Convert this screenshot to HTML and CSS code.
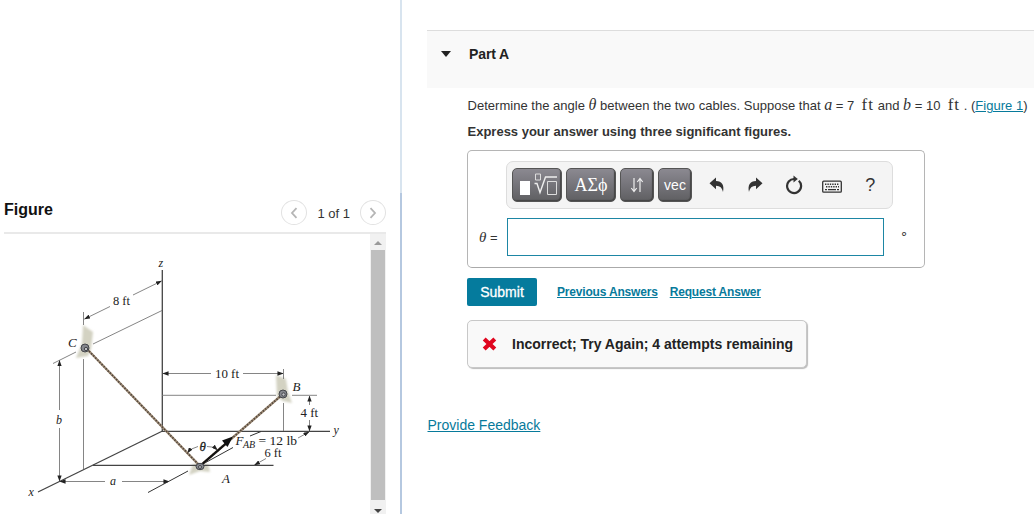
FILE: index.html
```html
<!DOCTYPE html>
<html lang="en">
  <head>
    <meta charset="UTF-8" />
    <meta name="viewport" content="width=device-width, initial-scale=1.0" />
    <title>Part A</title>
    <link rel="stylesheet" href="styles.css">
  </head>
  <body>
    <aside class="figure-panel">
      <header class="figure-header">
        <h2>Figure</h2>
        <nav class="pager">
          <button class="round" aria-label="Previous">
            <svg width="10" height="14" viewBox="0 0 10 14"><path d="M7.5 2.2 3 7l4.5 4.8" /></svg>
          </button>
          <span>1 of 1</span>
          <button class="round" aria-label="Next">
            <svg width="10" height="14" viewBox="0 0 10 14"><path d="M2.5 2.2 7 7l-4.5 4.8" /></svg>
          </button>
        </nav>
      </header>
      <div class="figure-body">
        <svg class="diagram" width="366" height="280" viewBox="4 234 366 280">
          <defs>
            <marker id="tip" viewBox="0 0 7 5" refX="6.5" refY="2.5" markerWidth="6" markerHeight="4.3" markerUnits="userSpaceOnUse" orient="auto-start-reverse">
              <path d="M0 0 7 2.5 0 5z" fill="#222" />
            </marker>
            <filter id="soft" x="-30%" y="-30%" width="160%" height="160%">
              <feGaussianBlur stdDeviation="0.8" />
            </filter>
          </defs>

          <!-- wall plates -->
          <g fill="#d3d2c2" filter="url(#soft)">
            <path d="M83 325 93 332 91 349 88 356 76 358 82 343z" />
            <path d="M276 375 286 379 288 392 292 403 283 401 277 397z" />
            <path d="M193 464 208 464 210 472 200 471 189 475z" />
          </g>

          <!-- axes -->
          <g class="axis">
            <path d="M162.300 270V431" />
            <path d="M162 431.300H330" />
            <path d="M162.500 431 38 492" />
            <path d="M93 465.300H273.500" />
          </g>
          <g class="thin">
            <path d="M162 310.500 93 344M76 352 53 363.500" />
            <path d="M83.500 312V325M83.500 359V469" />
            <path d="M162 395.300H276M292 395.300H317" />
            <path d="M283.500 369V379M283.500 403V431" />
          </g>
          <path class="guide" d="M148 492.500 188 471M202 464.500 233 447.500M250 436 261 431.500" />

          <!-- dimensions -->
          <g class="thin">
            <path d="M133 295 161.500 281" marker-end="url(#tip)" />
            <path d="M110 306.500 84.500 319" marker-end="url(#tip)" />
            <path d="M211 373.500H163" marker-end="url(#tip)" />
            <path d="M243 373.500H283" marker-end="url(#tip)" />
            <path d="M59.500 410V360.500" marker-end="url(#tip)" />
            <path d="M59.500 428V481" marker-end="url(#tip)" />
            <path d="M105 481.500H60" marker-end="url(#tip)" />
            <path d="M122 481.500H169" marker-end="url(#tip)" />
            <path d="M309.500 405V396" marker-end="url(#tip)" />
            <path d="M309.500 420V431" marker-end="url(#tip)" />
            <path d="M298 438 309 432" marker-end="url(#tip)" />
            <path d="M266 458.500 254.500 465" marker-end="url(#tip)" />
            <path d="M198 446.500Q191 448 187.500 453" marker-end="url(#tip)" />
            <path d="M207 446.500Q213 446 217.500 450" marker-end="url(#tip)" />
          </g>

          <!-- cables -->
          <path class="cable" d="M87 349 200 466 283 394" />
          <path class="strand" d="M87 349 200 466 283 394" />
          <path class="force" d="M200 466 226 443.500" />
          <path d="M233 436.500 227.500 447 222 440.500z" fill="#111" />

          <!-- pins -->
          <g class="pin">
            <circle cx="85" cy="348" r="4" /><circle class="hole" cx="86" cy="349" r="1.700" />
            <circle cx="283" cy="394" r="4" /><circle class="hole" cx="283.500" cy="394.500" r="1.700" />
            <ellipse cx="200" cy="466.500" rx="4" ry="3.200" /><circle class="hole" cx="200" cy="467" r="1.500" />
          </g>

          <g class="label">
            <text class="it" x="158.500" y="267">z</text>
            <text x="113" y="304.500" textLength="17" lengthAdjust="spacingAndGlyphs">8 ft</text>
            <text class="it big" x="68" y="346.500">C</text>
            <text x="215" y="378" textLength="24" lengthAdjust="spacingAndGlyphs">10 ft</text>
            <text class="it big" x="292.500" y="391">B</text>
            <text x="300.500" y="417" textLength="17.500" lengthAdjust="spacingAndGlyphs">4 ft</text>
            <text class="it" x="333.500" y="434">y</text>
            <text class="it" x="56" y="424">b</text>
            <text class="it" x="110" y="484.500">a</text>
            <text class="it" x="28.500" y="496">x</text>
            <text class="it big" x="222" y="483">A</text>
            <text class="it big theta" x="199.500" y="450.500">θ</text>
            <text class="it big" x="235.500" y="445">F</text>
            <text class="it sub" x="243" y="448">AB</text>
            <text x="258.500" y="445" textLength="38.500" lengthAdjust="spacingAndGlyphs">= 12 lb</text>
            <text x="264.500" y="457" textLength="17" lengthAdjust="spacingAndGlyphs">6 ft</text>
          </g>
        </svg>
        <div class="scrollbar">
          <span class="arrow up"></span>
          <span class="thumb"></span>
          <span class="arrow down"></span>
        </div>
      </div>
    </aside>

    <main>
      <header class="part-header">
        <span class="caret"></span>
        <h1>Part A</h1>
      </header>

      <section class="part">
        <p class="question">Determine the angle <i class="math">θ</i> between the two cables. Suppose that <i class="math">a</i> = 7 &nbsp;<span class="math ft">ft</span> and <i class="math">b</i> = 10 &nbsp;<span class="math ft">ft</span> . (<a href="#">Figure 1</a>)</p>
        <p class="hint">Express your answer using three significant figures.</p>

        <div class="answer">
          <div class="toolbar">
            <button class="key wide" aria-label="Templates">
              <svg width="40" height="26" viewBox="0 0 40 26">
                <path d="M3 9h10v14H3z" fill="#fff" />
                <path d="M18.500 2h5v6h-5zM30.500 9.500h9v13h-9z" fill="none" stroke="#ddd" />
                <path d="M17.500 11.500h2.500l3 9L28.500 5H40" fill="none" stroke="#eee" stroke-width="1.400" />
              </svg>
            </button>
            <button class="key wide greek">ΑΣϕ</button>
            <button class="key narrow" aria-label="Arrows">
              <svg width="14" height="18" viewBox="0 0 14 18"><path d="M4 2v13M1.300 12 4 15.500 6.700 12M10 16V3M7.300 6 10 2.500 12.700 6" /></svg>
            </button>
            <button class="key narrow">vec</button>
            <button class="tool first" aria-label="Undo">
              <svg width="16" height="16" viewBox="0 0 16 16"><path d="M.5 6.200 7 .5v3.600c6 .2 8.500 4.200 7 10.900C13 10.800 11.200 9 7 8.800v3.400z" /></svg>
            </button>
            <button class="tool" aria-label="Redo">
              <svg width="16" height="16" viewBox="0 0 16 16"><path d="M15.500 6.200 9 .5v3.600C3 4.300.5 8.300 2 15 3 10.800 4.800 9 9 8.800v3.400z" /></svg>
            </button>
            <button class="tool" aria-label="Reset">
              <svg width="18" height="20" viewBox="0 0 18 20"><path class="ring" d="M13.800 5.800A7 7 0 1 1 9.500 4" /><path d="M8.500.500 12.800 4 8.500 7.500z" /></svg>
            </button>
            <button class="tool keyboard" aria-label="Keyboard">
              <svg width="20" height="14" viewBox="0 0 20 14">
                <rect x=".7" y="1.200" width="18.600" height="11" rx="1" fill="none" stroke="#333" stroke-width="1.300" />
                <path d="M3 4.300h14M4 6.800h13" stroke="#333" stroke-width="1.500" stroke-dasharray="1.400 1" />
                <path d="M3 9.700h2M6 9.700h8M15 9.700h2" stroke="#333" stroke-width="1.300" />
              </svg>
            </button>
            <button class="tool help">?</button>
          </div>
          <div class="entry">
            <label for="theta"><i class="math">θ</i> =</label>
            <input id="theta" type="text" />
            <span class="unit">∘</span>
          </div>
        </div>

        <div class="actions">
          <button class="submit">Submit</button>
          <a href="#">Previous Answers</a>
          <a href="#">Request Answer</a>
        </div>

        <div class="feedback">
          <svg width="15" height="14" viewBox="0 0 15 14"><path d="M2.200 2 12.800 12M12.800 2 2.200 12" stroke="#e0061f" stroke-width="4.200" /></svg>
          <strong>Incorrect; Try Again; 4 attempts remaining</strong>
        </div>
      </section>

      <a class="provide" href="#">Provide Feedback</a>
    </main>
  </body>
</html>
```
FILE: styles.css
```css
* {
  padding: 0;
  margin: 0;
  box-sizing: border-box;
}

body {
  display: grid;
  grid-template-columns: 402px 1fr;
  height: 514px;
  overflow: hidden;
  background-color: #fff;
  color: #333;
  font-family: "Liberation Sans", Arial, sans-serif;
  font-size: 13px;
}

button {
  border: none;
  background: none;
  font-family: inherit;
}

a {
  color: #077a9b;
}

/* left side */

.figure-panel {
  padding: 193px 14px 0 4px;
  background: linear-gradient(#d8e4ef 193px, #b5c8e0 193px) right / 2px 100% no-repeat;
  overflow: hidden;
}

.figure-header {
  display: flex;
  justify-content: space-between;
  height: 41px;
  width: 382px;
  border-bottom: 2px solid #e9e9e9;
}

h2 {
  padding-top: 7px;
  color: #111;
  font-size: 16px;
  line-height: 20px;
}

.pager {
  display: flex;
  align-items: center;
  gap: 10px;
  font-size: 13px;
}

.pager span {
  padding-top: 2px;
}

.round {
  display: grid;
  place-items: center;
  width: 26px;
  height: 25px;
  border: 1px solid #e2e2e2;
  border-radius: 50%;
}

.round path {
  fill: none;
  stroke: #b5b5b5;
  stroke-width: 1.8;
}

.figure-body {
  display: flex;
  width: 382px;
  height: 280px;
}

.scrollbar {
  display: flex;
  flex-direction: column;
  align-items: center;
  width: 16px;
  background-color: #f1f1f1;
}

.arrow {
  flex: none;
  border: 4px solid transparent;
}

.up {
  margin: 3px 0 5px;
  border-bottom-color: #999;
}

.thumb {
  flex: none;
  width: 14px;
  height: 250px;
  background-color: #bfbfbf;
}

.down {
  margin-top: 9px;
  border-top-color: #444;
}

/* diagram */

.diagram {
  flex: none;
}

.axis path {
  fill: none;
  stroke: #444;
  stroke-width: 1.3;
}

.thin path {
  fill: none;
  stroke: #777;
  stroke-width: 0.9;
}

.guide {
  fill: none;
  stroke: #333;
}

.cable {
  fill: none;
  stroke: #9c8a75;
  stroke-width: 2.4;
}

.strand {
  fill: none;
  stroke: #50443a;
  stroke-width: 1.8;
  stroke-dasharray: 1.3 1.7;
}

.force {
  stroke: #111;
  stroke-width: 2.2;
}

.pin circle,
.pin ellipse {
  fill: #85878d;
  stroke: #44464a;
}

.pin .hole {
  fill: #bfc0c5;
}

.label {
  fill: #222;
  font-family: "Liberation Serif", "Times New Roman", serif;
  font-size: 12px;
}

.it {
  font-style: italic;
}

.big {
  font-size: 13px;
}

.sub {
  font-size: 10px;
}

.theta {
  stroke: #222;
  stroke-width: 0.3;
}

/* right side */

main {
  padding: 30px 0 0 25px;
}

.part-header {
  display: flex;
  align-items: flex-start;
  gap: 18px;
  height: 58px;
  padding: 15px 14px;
  border-top: 1px solid #ddd;
  background-color: #f9f9f9;
}

.caret {
  margin-top: 5px;
  border: 5.5px solid transparent;
  border-top: 6px solid #222;
  border-bottom: 0;
}

h1 {
  font-size: 14px;
  line-height: 16px;
  letter-spacing: -0.1px;
  color: #222;
}

.part {
  padding: 8px 0 0 40px;
}

.question,
.hint {
  height: 26px;
  padding-left: 0.5px;
  line-height: 20px;
  white-space: nowrap;
}

.question {
  letter-spacing: 0.02px;
}

.hint {
  font-weight: bold;
}

.math {
  font-family: "Liberation Serif", "Times New Roman", serif;
  font-size: 16px;
  line-height: 1;
}

.ft {
  font-size: 17px;
  letter-spacing: 1px;
}

.answer {
  width: 458px;
  height: 118px;
  margin-top: 2px;
  padding: 10px 0 0 11px;
  border: 1px solid #b5b5b5;
  border-bottom-color: #aaa;
  border-radius: 5px;
}

.toolbar {
  display: flex;
  align-items: center;
  width: 387px;
  height: 48px;
  margin-left: 27px;
  padding-left: 5px;
  border: 1px solid #ddd;
  border-radius: 7px;
  background-color: #f4f4f4;
}

.key {
  display: grid;
  place-items: center;
  flex: none;
  height: 34px;
  margin-right: 4px;
  border: 1px solid #555;
  border-radius: 5px;
  background-image: linear-gradient(#8b8991, #5f5f62);
  box-shadow: inset -1px -1px 1px #444;
  color: #fff;
  font-size: 14px;
}

.wide {
  width: 50px;
}

.narrow {
  width: 34px;
}

.greek {
  font-family: "Liberation Serif", "Times New Roman", serif;
  font-size: 18px;
}

.narrow path {
  fill: none;
  stroke: #eee;
  stroke-width: 1.2;
}

.tool {
  display: grid;
  place-items: center;
  flex: none;
  width: 38.3px;
  color: #333;
}

.first {
  margin-left: 2px;
}

.tool path {
  fill: #333;
}

.tool .ring {
  fill: none;
  stroke: #333;
  stroke-width: 2.2;
}

.keyboard {
  padding-top: 4px;
}

.help {
  font-size: 18px;
}

.entry {
  display: flex;
  align-items: center;
  height: 38px;
  margin-top: 9px;
}

.entry label {
  width: 28px;
}

.entry .math {
  font-size: 15px;
}

.entry input {
  width: 377px;
  height: 38px;
  border: 1px solid #1d86a4;
}

.unit {
  margin: -8px 0 0 16px;
  font-family: "DejaVu Sans", sans-serif;
  font-size: 13px;
}

.actions {
  display: flex;
  align-items: center;
  height: 28px;
  margin-top: 10px;
  font-size: 12px;
  font-weight: bold;
}

.actions a {
  margin-right: 12px;
  letter-spacing: -0.18px;
}

.submit {
  width: 70px;
  height: 28px;
  margin-right: 20px;
  border-radius: 2px;
  background-color: #057b9d;
  color: #fff;
  font-size: 14px;
  -webkit-text-stroke: 0.3px #fff;
}

.feedback {
  display: flex;
  align-items: center;
  gap: 15px;
  width: 340px;
  height: 48px;
  margin-top: 14px;
  padding-left: 14px;
  border: 1px solid #c8c8c8;
  border-radius: 5px;
  background-color: #f9f9f9;
  box-shadow: 1px 1px 1px #bbb;
  color: #222;
  font-size: 14px;
}

.provide {
  display: inline-block;
  margin-top: 49px;
  padding-left: 0.5px;
  font-size: 14px;
}
```
